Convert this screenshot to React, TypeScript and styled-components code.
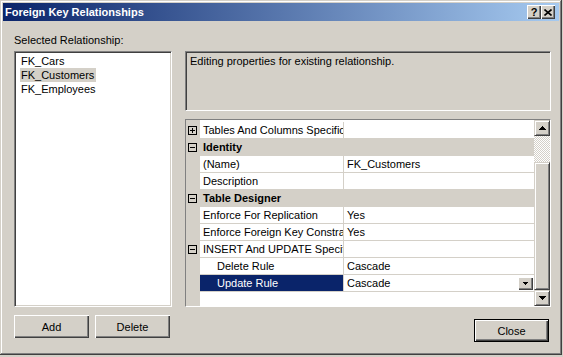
import styled, { createGlobalStyle } from "styled-components";

const GlobalStyle = createGlobalStyle`
  html, body {
    margin: 0;
    padding: 0;
    background: #d4d0c8;
  }
  body {
    font-family: "Liberation Sans", Arial, sans-serif;
    font-size: 11px;
    color: #000;
  }
`;

const Window = styled.div`
  box-sizing: border-box;
  width: 562px;
  height: 355px;
  padding: 3px;
  display: flex;
  flex-direction: column;
  background: #d4d0c8;
  box-shadow: inset -1px -1px #404040, inset 1px 1px #d4d0c8,
    inset -2px -2px #808080, inset 2px 2px #fff;
`;

const TitleBar = styled.div`
  height: 18px;
  display: flex;
  align-items: center;
  padding-left: 2px;
  background: linear-gradient(to right, #0a246a, #a6caf0);
  color: #fff;
  font-weight: bold;
`;

const Title = styled.div`
  flex: 1;
`;

const TitleButton = styled.button`
  box-sizing: border-box;
  width: 14px;
  height: 14px;
  padding: 0;
  border: none;
  display: flex;
  align-items: center;
  justify-content: center;
  background: #d4d0c8;
  box-shadow: inset 1px 1px #fff, inset -1px -1px #404040,
    inset -2px -2px #808080;
  font-family: "Liberation Sans", Arial, sans-serif;
  font-size: 11px;
  font-weight: bold;
  color: #000;
  &:last-child {
    margin-right: 4px;
  }
`;

const Body = styled.div`
  flex: 1;
  display: flex;
  gap: 13px;
  padding: 0 8px 0 11px;
`;

const LeftColumn = styled.div`
  width: 158px;
  display: flex;
  flex-direction: column;
`;

const RightColumn = styled.div`
  flex: 1;
  display: flex;
  flex-direction: column;
`;

const Label = styled.div`
  box-sizing: border-box;
  height: 30px;
  padding-top: 13px;
  line-height: 13px;
`;

const sunken = `
  border: 1px solid;
  border-color: #808080 #fff #fff #808080;
  box-shadow: inset 1px 1px #404040, inset -1px -1px #d4d0c8;
`;

const ListBox = styled.div`
  box-sizing: border-box;
  height: 256px;
  padding: 2px 2px;
  background: #fff;
  ${sunken}
`;

const ListItem = styled.div`
  line-height: 14px;
  height: 14px;
`;

const ItemText = styled.span<{ $selected?: boolean }>`
  display: inline-block;
  margin-left: 3px;
  padding: 0 2px 0 1px;
  background: ${(p) => (p.$selected ? "#d4d0c8" : "transparent")};
`;

const ButtonRow = styled.div`
  display: flex;
  gap: 6px;
  margin-top: 8px;
`;

const Button = styled.button<{ $default?: boolean }>`
  box-sizing: border-box;
  width: 75px;
  height: 23px;
  padding: 0;
  border: ${(p) => (p.$default ? "1px solid #000" : "none")};
  background: #d4d0c8;
  box-shadow: inset 1px 1px #fff, inset -1px -1px #404040,
    inset -2px -2px #808080;
  font-family: "Liberation Sans", Arial, sans-serif;
  font-size: 11px;
  color: #000;
`;

const DescBox = styled.div`
  box-sizing: border-box;
  height: 60px;
  margin-top: 30px;
  padding: 3px 4px;
  line-height: 13px;
  ${sunken}
`;

const PropertyGrid = styled.div`
  box-sizing: border-box;
  height: 188px;
  margin-top: 8px;
  display: flex;
  ${sunken}
`;

const Rows = styled.div`
  flex: 1;
  display: flex;
  flex-direction: column;
  padding-top: 2px;
  background: linear-gradient(to right, #d4d0c8 14px, #fff 14px);
`;

const Row = styled.div`
  display: flex;
  height: 17px;
`;

const Gutter = styled.div`
  width: 14px;
  display: flex;
  align-items: center;
  padding-left: 2px;
  box-sizing: border-box;
  background: #d4d0c8;
`;

const NameCell = styled.div<{ $header?: boolean; $indent?: boolean; $selected?: boolean }>`
  box-sizing: border-box;
  width: 144px;
  padding-left: ${(p) => (p.$indent ? 17 : 3)}px;
  line-height: 16px;
  white-space: nowrap;
  overflow: hidden;
  font-weight: ${(p) => (p.$header ? "bold" : "normal")};
  color: ${(p) => (p.$selected ? "#fff" : "#000")};
  background: ${(p) =>
    p.$selected ? "#0a246a" : p.$header ? "#d4d0c8" : "#fff"};
  border-right: 1px solid #d4d0c8;
  border-bottom: 1px solid #d4d0c8;
`;

const ValueCell = styled.div<{ $header?: boolean }>`
  flex: 1;
  display: flex;
  align-items: center;
  justify-content: space-between;
  padding-left: 3px;
  line-height: 16px;
  white-space: nowrap;
  overflow: hidden;
  background: ${(p) => (p.$header ? "#d4d0c8" : "#fff")};
  border-bottom: 1px solid #d4d0c8;
`;

const DropButton = styled.div`
  box-sizing: border-box;
  width: 15px;
  height: 13px;
  margin-right: 1px;
  display: flex;
  align-items: center;
  justify-content: center;
  background: #d4d0c8;
  box-shadow: inset 1px 1px #fff, inset -1px -1px #404040,
    inset -2px -2px #808080;
`;

const ScrollBar = styled.div`
  width: 16px;
  display: flex;
  flex-direction: column;
`;

const ScrollButton = styled.div`
  box-sizing: border-box;
  height: 16px;
  display: flex;
  align-items: center;
  justify-content: center;
  background: #d4d0c8;
  border: 1px solid;
  border-color: #d4d0c8 #404040 #404040 #d4d0c8;
  box-shadow: inset 1px 1px #fff, inset -1px -1px #808080;
`;

const Track = styled.div`
  height: 26px;
  background: repeating-conic-gradient(#fff 0% 25%, #d4d0c8 0% 50%) 0 0 / 2px 2px;
`;

const Thumb = styled.div`
  flex: 1;
  background: #d4d0c8;
  border: 1px solid;
  border-color: #d4d0c8 #404040 #404040 #d4d0c8;
  box-shadow: inset 1px 1px #fff, inset -1px -1px #808080;
`;

const Footer = styled.div`
  display: flex;
  justify-content: flex-end;
  margin-top: 12px;
  padding-right: 2px;
`;

function ToggleBox({ open }: { open: boolean }) {
  return (
    <svg width="9" height="9" viewBox="0 0 9 9" shapeRendering="crispEdges">
      <rect x="0.5" y="0.5" width="8" height="8" fill="none" stroke="#000" />
      <line x1="2" y1="4.5" x2="7" y2="4.5" stroke="#000" />
      {!open && <line x1="4.5" y1="2" x2="4.5" y2="7" stroke="#000" />}
    </svg>
  );
}

function Arrow({ up, size = 7 }: { up?: boolean; size?: number }) {
  const h = Math.ceil(size / 2);
  return (
    <svg width={size} height={h} viewBox={`0 0 ${size} ${h}`} shapeRendering="crispEdges">
      <polygon
        points={up ? `0,${h} ${size},${h} ${size / 2},0` : `0,0 ${size},0 ${size / 2},${h}`}
        fill="#000"
      />
    </svg>
  );
}

type Prop = {
  name: string;
  value?: string;
  header?: boolean;
  toggle?: "open" | "closed";
  indent?: boolean;
  selected?: boolean;
  dropdown?: boolean;
};

const properties: Prop[] = [
  { name: "Tables And Columns Specification", toggle: "closed" },
  { name: "Identity", header: true, toggle: "open" },
  { name: "(Name)", value: "FK_Customers" },
  { name: "Description" },
  { name: "Table Designer", header: true, toggle: "open" },
  { name: "Enforce For Replication", value: "Yes" },
  { name: "Enforce Foreign Key Constraint", value: "Yes" },
  { name: "INSERT And UPDATE Specification", toggle: "open" },
  { name: "Delete Rule", value: "Cascade", indent: true },
  { name: "Update Rule", value: "Cascade", indent: true, selected: true, dropdown: true },
];

const relationships = ["FK_Cars", "FK_Customers", "FK_Employees"];

export default function App() {
  return (
    <>
      <GlobalStyle />
      <Window>
        <TitleBar>
          <Title>Foreign Key Relationships</Title>
          <TitleButton>?</TitleButton>
          <TitleButton>
            <svg width="8" height="7" viewBox="0 0 8 7">
              <path d="M0.5 0.5 L7.5 6.5 M7.5 0.5 L0.5 6.5" stroke="#000" strokeWidth="1.6" />
            </svg>
          </TitleButton>
        </TitleBar>
        <Body>
          <LeftColumn>
            <Label>Selected Relationship:</Label>
            <ListBox>
              {relationships.map((r) => (
                <ListItem key={r}>
                  <ItemText $selected={r === "FK_Customers"}>{r}</ItemText>
                </ListItem>
              ))}
            </ListBox>
            <ButtonRow>
              <Button>Add</Button>
              <Button>Delete</Button>
            </ButtonRow>
          </LeftColumn>
          <RightColumn>
            <DescBox>Editing properties for existing relationship.</DescBox>
            <PropertyGrid>
              <Rows>
                {properties.map((p) => (
                  <Row key={p.name}>
                    <Gutter>{p.toggle && <ToggleBox open={p.toggle === "open"} />}</Gutter>
                    <NameCell $header={p.header} $indent={p.indent} $selected={p.selected}>
                      {p.name}
                    </NameCell>
                    <ValueCell $header={p.header}>
                      <span>{p.value}</span>
                      {p.dropdown && (
                        <DropButton>
                          <Arrow size={5} />
                        </DropButton>
                      )}
                    </ValueCell>
                  </Row>
                ))}
              </Rows>
              <ScrollBar>
                <ScrollButton>
                  <Arrow up />
                </ScrollButton>
                <Track />
                <Thumb />
                <ScrollButton>
                  <Arrow />
                </ScrollButton>
              </ScrollBar>
            </PropertyGrid>
            <Footer>
              <Button $default>Close</Button>
            </Footer>
          </RightColumn>
        </Body>
      </Window>
    </>
  );
}
